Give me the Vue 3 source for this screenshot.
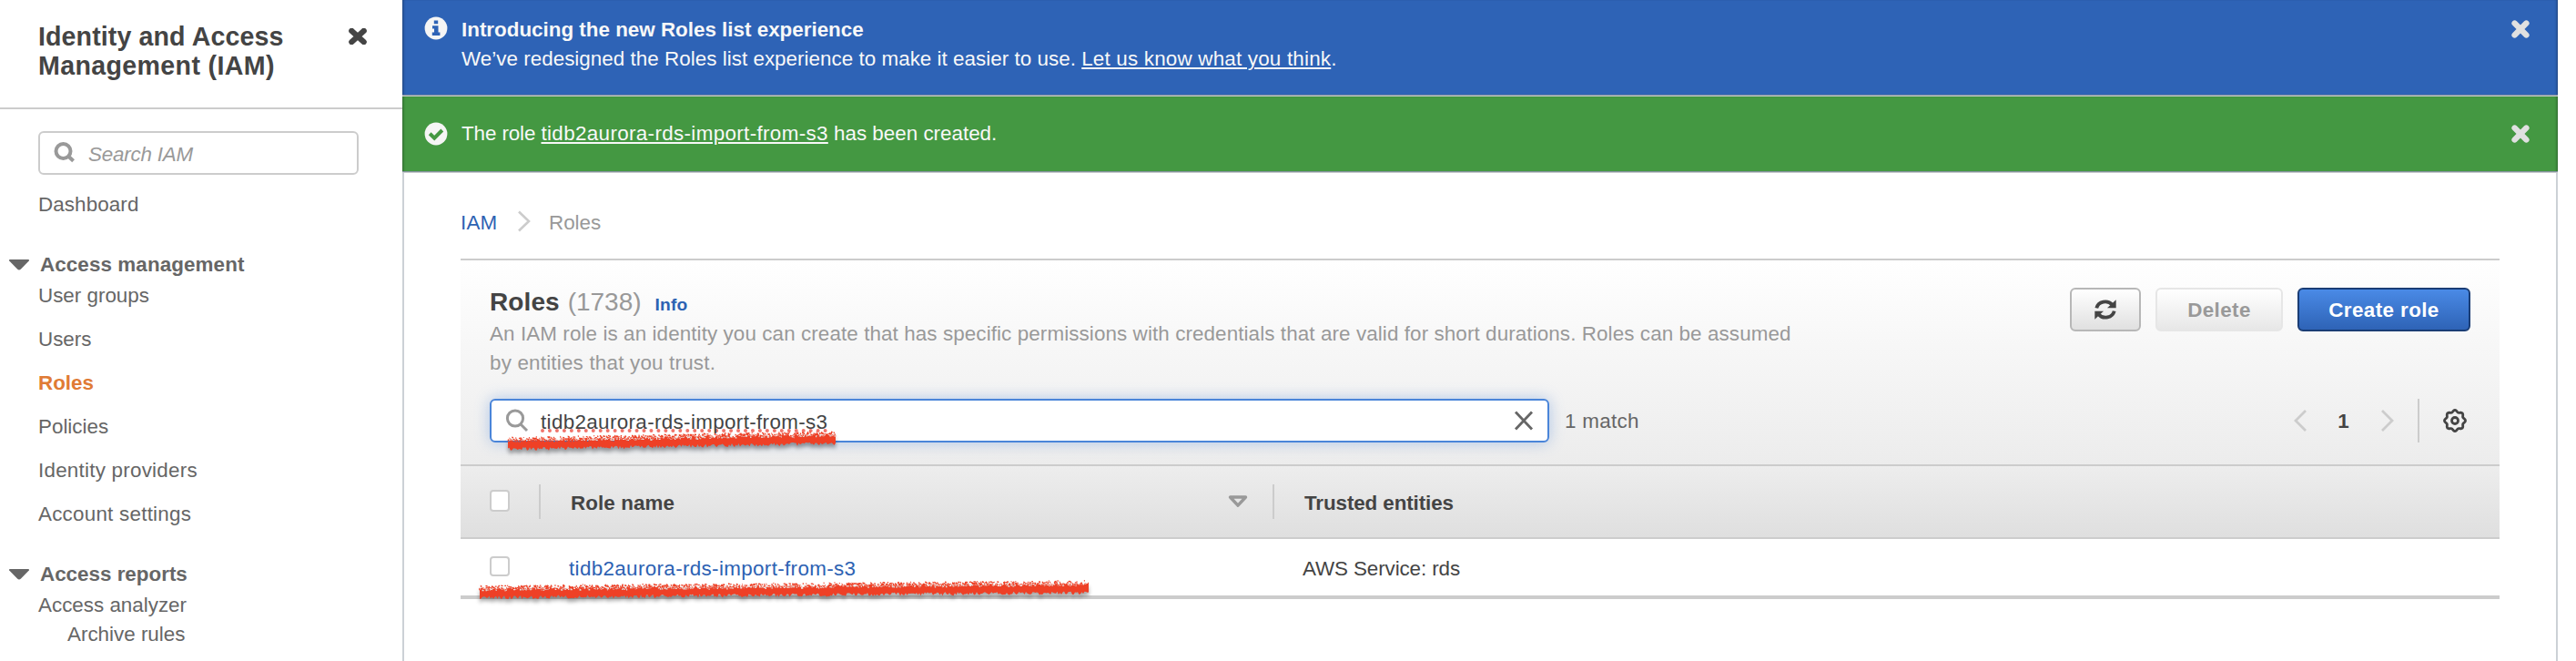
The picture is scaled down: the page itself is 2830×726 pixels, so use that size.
<script setup>
const manageLinks = [
  { label: 'User groups', cls: 't05' },
  { label: 'Users', cls: '' },
  { label: 'Roles', cls: 'active' },
  { label: 'Policies', cls: '' },
  { label: 'Identity providers', cls: 't24' },
  { label: 'Account settings', cls: 't24' },
]

// Scalloped outline of the settings gear: eight teeth around a circle.
const gearPath = (() => {
  const pts = []
  for (let i = 0; i < 96; i++) {
    const a = (i / 96) * Math.PI * 2
    const r = 10.5 + 1.0 * Math.cos(8 * a)
    pts.push(`${(13 + r * Math.cos(a)).toFixed(2)} ${(13 + r * Math.sin(a)).toFixed(2)}`)
  }
  return `M${pts.join('L')}Z`
})()

// Rough crayon stroke: a ragged body with loose specks along both edges.
function crayon(length, rise, seed) {
  let s = seed
  const rnd = () => {
    s = (s * 1664525 + 1013904223) % 4294967296
    return s / 4294967296
  }
  const mid = (x) => 12 + rise - (rise * x) / length
  const top = []
  const bottom = []
  for (let x = 0; x <= length; x += 1.5) {
    top.push(`${(x + 2).toFixed(1)} ${(mid(x) - 3 - rnd() * 4).toFixed(1)}`)
    bottom.unshift(`${(x + 2).toFixed(1)} ${(mid(x) + 3 + rnd() * 4).toFixed(1)}`)
  }
  let specks = ''
  for (let i = 0; i < length * 1.3; i++) {
    const x = rnd() * length
    const y = mid(x) - 4 - rnd() * 5
    const w = 0.8 + rnd() * 1.4
    specks += `M${(x + 1).toFixed(1)} ${y.toFixed(1)}v${(1 + rnd() * 1.6).toFixed(1)}h${w.toFixed(1)}v-1.2z`
  }
  return `M${top.join('L')}L${bottom.join('L')}Z${specks}`
}
const searchMark = crayon(360, 6.5, 11)
const rowMark = crayon(669, 5.5, 29)
</script>

<template>
  <div class="page">
    <aside class="side">
      <header class="side-head">
        <h1>Identity and Access<br /><span class="t35">Management (IAM)</span></h1>
        <svg class="side-close" width="20" height="18" viewBox="0 0 20 18"><path d="M3.4 3L16.6 15M16.6 3L3.4 15" /></svg>
      </header>
      <div class="side-search">
        <svg width="24" height="24" viewBox="0 0 24 24"><circle cx="10.5" cy="10" r="8" /><path d="M16 15.5L21.6 20.8" /></svg>
        <span>Search IAM</span>
      </div>
      <nav>
        <a class="dash t10">Dashboard</a>
        <h2><svg width="22" height="12" viewBox="0 0 22 12"><path d="M1 0H21Q23 .5 21.3 2L13 10.6Q11 12.6 9 10.6L.7 2Q-1 .5 1 0Z" /></svg><span class="t10">Access management</span></h2>
        <ul>
          <li v-for="l in manageLinks" :key="l.label"><a :class="l.cls">{{ l.label }}</a></li>
        </ul>
        <h2><svg width="22" height="12" viewBox="0 0 22 12"><path d="M1 0H21Q23 .5 21.3 2L13 10.6Q11 12.6 9 10.6L.7 2Q-1 .5 1 0Z" /></svg><span>Access reports</span></h2>
        <a class="sub-1">Access analyzer</a>
        <a class="sub-2">Archive rules</a>
      </nav>
    </aside>

    <main class="main">
      <section class="flash info">
        <svg class="flash-icon" width="26" height="26" viewBox="0 0 26 26">
          <circle cx="13" cy="13" r="12.4" fill="#f5f5f5" />
          <path d="M10.8 4.500h4.400v3.800h-4.400zM9 10.200h6.500v7.400h1.900v3.400H8.800v-3.400h2.200v-4H9z" fill="#2e63b6" />
        </svg>
        <div class="flash-text">
          <strong>Introducing the new Roles list experience</strong>
          <p><span class="intro">We’ve redesigned the Roles list experience to make it easier to use. </span><a class="t20">Let us know what you think</a>.</p>
        </div>
        <svg class="flash-close" width="20" height="20" viewBox="0 0 20 20"><path d="M3.6 3.6L16.4 16.4M16.4 3.6L3.6 16.4" /></svg>
      </section>
      <section class="flash success">
        <svg class="flash-icon" width="26" height="26" viewBox="0 0 26 26">
          <circle cx="13" cy="13" r="12.4" fill="#f5f5f5" />
          <path d="M6.2 12.8L11.2 17.6L19.8 9" fill="none" stroke="#449842" stroke-width="4" />
        </svg>
        <div class="flash-text">
          <p><span class="lead">The role </span><a class="t35">tidb2aurora-rds-import-from-s3</a> has been created.</p>
        </div>
        <svg class="flash-close" width="20" height="20" viewBox="0 0 20 20"><path d="M3.6 3.6L16.4 16.4M16.4 3.6L3.6 16.4" /></svg>
      </section>

      <div class="content">
        <div class="crumbs">
          <a>IAM</a>
          <svg width="16" height="24" viewBox="0 0 16 24"><path d="M2 1.5L13 12L2 22.5" /></svg>
          <span>Roles</span>
        </div>

        <section class="panel">
          <div class="panel-top">
            <div class="panel-copy">
              <h3>Roles <em>(1738)</em><a>Info</a></h3>
              <p><span class="t10">An IAM role is an identity you can create that has specific permissions with credentials that are valid for short durations. Roles can be assumed</span><br /><span class="t20">by entities that you trust.</span></p>
            </div>
            <div class="buttons">
              <button class="btn refresh">
                <svg width="24" height="24" viewBox="0 0 24 24">
                  <path d="M2.3 10.4A9.7 8.8 0 0 1 19.5 6.8" fill="none" stroke="#444" stroke-width="3.8" />
                  <path d="M23.7 1.2V10.2H14Z" fill="#444" />
                  <path d="M21.7 13.6A9.7 8.8 0 0 1 4.5 17.2" fill="none" stroke="#444" stroke-width="3.8" />
                  <path d="M.3 22.8V13.8H10Z" fill="#444" />
                </svg>
              </button>
              <button class="btn delete"><span>Delete</span></button>
              <button class="btn create"><span>Create role</span></button>
            </div>
          </div>
          <div class="tools">
            <div class="filter">
              <svg class="glass" width="26" height="26" viewBox="0 0 26 26"><circle cx="11" cy="10.5" r="8.6" /><path d="M17 17L24 24" /></svg>
              <span class="query">tidb2aurora-rds-import-from-s3</span>
              <svg class="clear" width="22" height="22" viewBox="0 0 22 22"><path d="M2 1.5L20 20.5M20 1.5L2 20.5" /></svg>
              <svg class="crayon at-search" width="366" height="30" viewBox="0 0 366 30"><path :d="searchMark" /></svg>
            </div>
            <span class="matches">1 match</span>
            <div class="pager">
              <svg width="16" height="26" viewBox="0 0 16 26"><path d="M14 2L3 13L14 24" /></svg>
              <b>1</b>
              <svg width="16" height="26" viewBox="0 0 16 26"><path d="M2 2L13 13L2 24" /></svg>
              <i></i>
              <svg class="gear" width="26" height="26" viewBox="0 0 26 26"><path :d="gearPath" /><circle cx="13" cy="13" r="3.5" /></svg>
            </div>
          </div>
        </section>

        <div class="row thead">
          <div class="cell-check"><span class="box"></span></div>
          <div class="cell-name">
            <span class="label t10">Role name</span>
            <svg width="22" height="14" viewBox="0 0 22 14"><path d="M2.5 2H19.5L11 11.2Z" /></svg>
          </div>
          <div class="cell-trust">Trusted entities</div>
        </div>
        <div class="row tbody">
          <div class="cell-check"><span class="box"></span></div>
          <div class="cell-name"><a class="label t35">tidb2aurora-rds-import-from-s3</a></div>
          <div class="cell-trust">AWS Service: rds</div>
          <svg class="crayon at-row" width="676" height="30" viewBox="0 0 676 30"><path :d="rowMark" /></svg>
        </div>
      </div>
    </main>
  </div>
</template>

<style>
body {
  margin: 0;
  background: #fff;
}
</style>

<style scoped>
* {
  box-sizing: border-box;
}
.page {
  display: flex;
  width: 2830px;
  height: 726px;
  overflow: hidden;
  font: 22.4px/32px "Liberation Sans", Arial, sans-serif;
  color: #666;
}
h1, h2, h3, p, ul {
  margin: 0;
  padding: 0;
  list-style: none;
}
svg {
  display: block;
  flex: none;
}
.t10 { letter-spacing: 0.1px; }
.t20 { letter-spacing: 0.2px; }
.t24 { letter-spacing: 0.24px; }
.t35 { letter-spacing: 0.35px; }

.side {
  width: 442px;
  flex: none;
}
.side-head {
  display: flex;
  justify-content: space-between;
  height: 120px;
  padding: 24px 39px 0 42px;
  border-bottom: 2px solid #ccc;
}
h1 {
  font-size: 28.6px;
  line-height: 32px;
  letter-spacing: 0.1px;
  color: #444;
}
.side-close {
  margin-top: 7px;
  stroke: #444;
  stroke-width: 6.4;
  stroke-linecap: round;
}
.side-search {
  display: flex;
  align-items: center;
  width: 352px;
  height: 48px;
  margin: 24px 0 17px 42px;
  padding-left: 15px;
  border: 2px solid #ccc;
  border-radius: 6px;
  font-style: italic;
  letter-spacing: -0.2px;
  color: #999;
}
.side-search svg {
  margin-right: 14px;
  fill: none;
  stroke: #999;
  stroke-width: 4;
}
.side-search span {
  padding-top: 4px;
}
nav a {
  display: block;
  padding-left: 42px;
}
nav .dash {
  margin-bottom: 34px;
}
nav h2 {
  display: flex;
  align-items: center;
  padding-left: 10px;
  margin-bottom: 2px;
  font-size: 22.4px;
  line-height: 32px;
}
nav h2 svg {
  margin: -1px 12px 0 0;
  fill: #666;
}
nav ul {
  display: flex;
  flex-direction: column;
  gap: 16px;
  margin-bottom: 34px;
}
nav .active {
  font-weight: bold;
  color: #e07b35;
}
nav .sub-2 {
  padding-left: 74px;
}

.main {
  width: 2368px;
  flex: none;
  border-right: 2px solid #ccd1d6;
  background: linear-gradient(90deg, #ccd1d6 2px, #fff 2px);
}
.flash {
  display: flex;
  width: 2368px;
  padding-left: 24px;
  color: #f8f8f8;
  border-bottom: 1px solid #c8cbce;
  box-shadow: inset 0 -1px #85939e, inset 3px 0 3px -2px rgba(0, 0, 0, 0.35), inset -3px 0 3px -2px rgba(0, 0, 0, 0.35);
}
.info {
  height: 106px;
  padding-top: 17px;
  background: #2e63b6;
}
.success {
  height: 84px;
  padding-top: 25px;
  background: #449842;
}
.flash-icon {
  margin: 1px 15px 0 0;
}
.success .flash-icon {
  margin-top: 3px;
}
.flash-text {
  flex: 1;
}
.flash-text strong {
  display: block;
}
.intro {
  letter-spacing: 0.03px;
}
.lead {
  letter-spacing: -0.1px;
}
.flash a {
  text-decoration: underline;
  text-decoration-thickness: 2px;
  text-underline-offset: 2px;
}
.flash-close {
  margin: 5px 31px 0 0;
  stroke: #e0e0e0;
  stroke-width: 6.4;
  stroke-linecap: round;
}
.success .flash-close {
  margin-top: 6px;
}

.content {
  width: 2240px;
  margin: 38px 0 0 64px;
}
.crumbs {
  display: flex;
  height: 32px;
  padding-top: 1px;
  margin-bottom: 24px;
  color: #999;
}
.crumbs a {
  width: 62px;
  letter-spacing: 0.2px;
  color: #2d62b3;
}
.crumbs svg {
  margin: 2px 19px 0 0;
  fill: none;
  stroke: #ccc;
  stroke-width: 2.6;
}
.panel {
  height: 226px;
  padding: 30px 32px 0;
  border-top: 2px solid #ccc;
  background: linear-gradient(#fff, #ececec);
}
.panel-top {
  display: flex;
  justify-content: space-between;
  height: 122px;
}
.panel-copy h3 {
  height: 35px;
  font-size: 28px;
  line-height: 32px;
  letter-spacing: 0.1px;
  color: #444;
}
.panel-copy em {
  margin-left: 1px;
  font-style: normal;
  font-weight: normal;
  letter-spacing: 0;
  color: #999;
}
.panel-copy h3 a {
  margin-left: 15px;
  font-size: 19.2px;
  letter-spacing: 0.2px;
  color: #2d62b3;
}
.panel-copy p {
  color: #999;
  white-space: nowrap;
}
.buttons {
  display: flex;
  gap: 16px;
}
.btn {
  display: flex;
  align-items: center;
  justify-content: center;
  height: 48px;
  padding: 0;
  border: 2px solid #b7b7b7;
  border-radius: 6px;
  background: linear-gradient(#fff, #e0e0e0);
  font: bold 22.4px/32px "Liberation Sans", Arial, sans-serif;
  letter-spacing: 0.4px;
}
.btn span {
  padding-top: 1px;
}
.refresh {
  width: 78px;
}
.delete {
  width: 140px;
  border-color: #e6e6e6;
  background: linear-gradient(#fff, #e7e7e7);
  color: #999;
}
.create {
  width: 190px;
  border-color: #1a3d75;
  background: linear-gradient(#4a8ae6, #2e63b6);
  color: #fff;
}
.tools {
  display: flex;
  height: 48px;
}
.filter {
  position: relative;
  display: flex;
  align-items: center;
  width: 1164px;
  padding: 0 15px 0 15px;
  border: 2px solid #4a85d9;
  border-radius: 6px;
  background: #fff;
  box-shadow: 0 0 16px rgba(74, 133, 217, 0.4);
  color: #444;
}
.glass {
  margin-right: 13px;
  fill: none;
  stroke: #999;
  stroke-width: 3;
}
.query {
  margin-top: 4px;
  letter-spacing: 0.35px;
  text-decoration: underline dotted #f0736a;
  text-decoration-thickness: 4px;
  text-decoration-skip-ink: none;
  text-underline-offset: 0;
}
.clear {
  margin-left: auto;
  stroke: #666;
  stroke-width: 2.8;
}
.matches {
  padding: 9px 0 0 17px;
  letter-spacing: 0.3px;
}
.pager {
  display: flex;
  align-items: center;
  margin-left: auto;
  padding-right: 4px;
  color: #444;
}
.pager svg {
  fill: none;
  stroke: #ccc;
  stroke-width: 2.8;
}
.pager b {
  width: 80px;
  padding: 1px 1px 0 0;
  text-align: center;
}
.pager i {
  width: 2px;
  height: 48px;
  margin: 0 26px 0 25px;
  background: #ccc;
}
.pager .gear {
  stroke: #444;
}

.row {
  position: relative;
  display: flex;
  align-items: center;
}
.thead {
  height: 82px;
  border: solid #ccc;
  border-width: 2px 0;
  background: linear-gradient(#ededed, #dfdfdf);
  font-weight: bold;
  color: #444;
}
.tbody {
  height: 66px;
  border-bottom: 4px solid #ccc;
  color: #444;
}
.cell-check {
  width: 86px;
  height: 38px;
  padding: 7px 0 0 32px;
}
.thead .cell-check {
  width: 88px;
  border-right: 2px solid #ccc;
  padding-top: 6px;
}
.box {
  display: block;
  width: 22px;
  height: 22px;
  border: 2px solid #ccc;
  border-radius: 4px;
  background: #fff;
}
.thead .box {
  height: 24px;
}
.cell-name {
  display: flex;
  align-items: center;
  width: 806px;
  height: 38px;
  padding-left: 33px;
}
.label {
  padding-top: 3px;
}
.thead .cell-name {
  padding-right: 27px;
  border-right: 2px solid #ccc;
}
.cell-name svg {
  margin-left: auto;
  fill: none;
  stroke: #999;
  stroke-width: 3.4;
  stroke-linejoin: round;
}
.cell-name a {
  color: #2d62b3;
}
.cell-trust {
  padding: 3px 0 0 33px;
  letter-spacing: -0.1px;
}
.crayon {
  position: absolute;
  overflow: visible;
  fill: #ee4026;
  filter: drop-shadow(0 4px 2px rgba(0, 0, 0, 0.35));
}
.at-search {
  left: 16px;
  top: 30px;
}
.at-row {
  left: 19px;
  top: 42px;
}
</style>
